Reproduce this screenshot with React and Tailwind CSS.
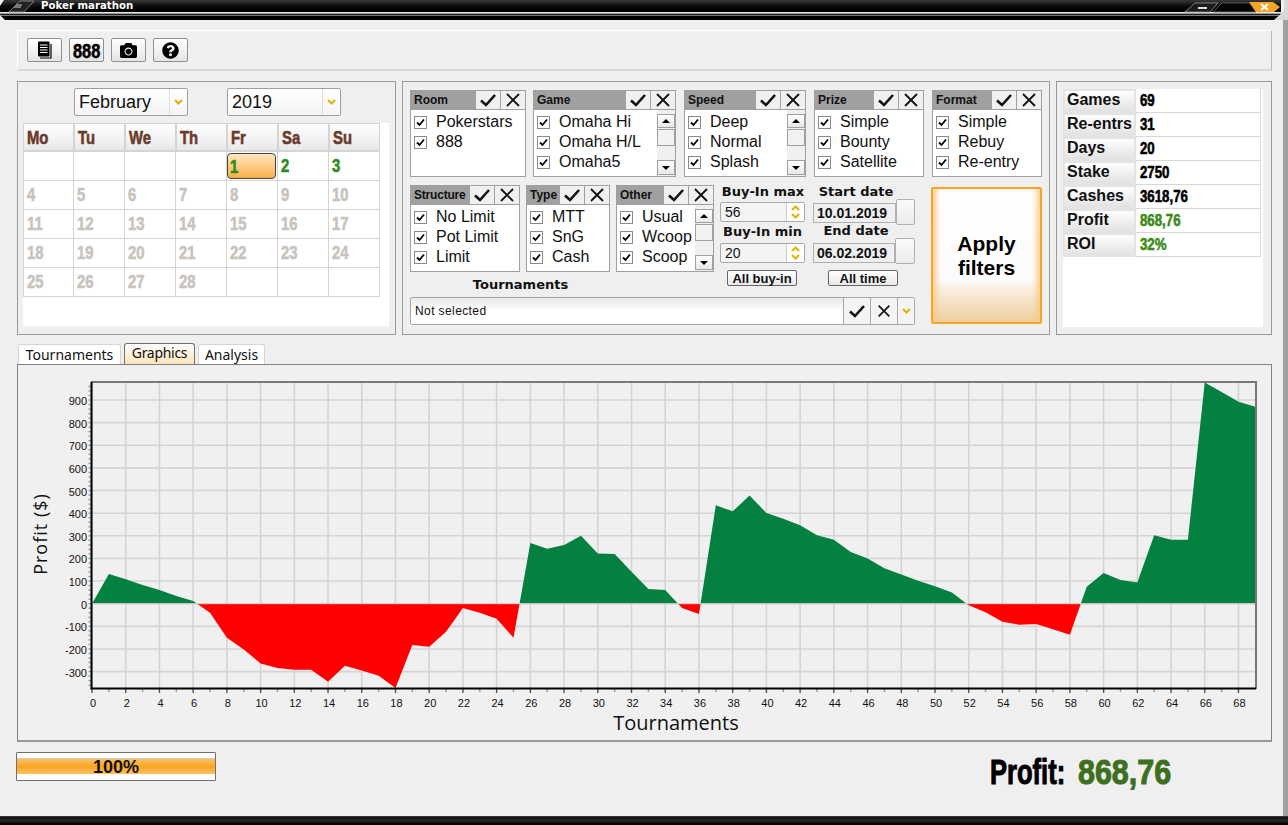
import React from 'react';
import { FaCamera, FaQuestionCircle } from 'react-icons/fa';

const arial = "font-['Liberation_Sans',Arial,sans-serif]";
const label = "font-['DejaVu_Sans',sans-serif] font-bold text-[13px] text-[#111]";

const PROFIT = [0, 131, 108, 83, 60, 34, 12, -40, -150, -202, -264, -284, -292, -292, -345, -274, -295, -318, -372, -183, -190, -124, -19, -40, -66, -150, 268, 243, 259, 300, 222, 220, 141, 65, 60, -19, -46, 435, 408, 478, 401, 375, 347, 302, 283, 229, 200, 157, 129, 101, 77, 49, -7, -38, -80, -93, -90, -113, -137, 75, 136, 105, 94, 303, 283, 283, 978, 935, 892, 870];

const X0 = 92;
const XSTEP = 16.86;
const Y0 = 603.7;
const YSCALE = 0.2263;
const px = (i) => X0 + i * XSTEP;
const py = (v) => Y0 - v * YSCALE;

// no Impact on this box, so squeeze bold Liberation horizontally
function Imp({ children, className = 'scale-x-[0.78] [-webkit-text-stroke:0.6px]' }) {
  return (
    <span className={`inline-block origin-left whitespace-nowrap ${arial} font-bold ${className}`}>{children}</span>
  );
}

function CheckIcon({ size = 18 }) {
  return (
    <svg width={size} height={size} viewBox="0 0 18 18" fill="none" stroke="#111" strokeWidth="2.6">
      <path d="M2 9.5 L7 14 L16 4" />
    </svg>
  );
}

function CrossIcon({ size = 18 }) {
  return (
    <svg width={size} height={size} viewBox="0 0 18 18" fill="none" stroke="#111" strokeWidth="1.8">
      <path d="M3 3 L15 15 M15 3 L3 15" />
    </svg>
  );
}

function Chevron({ up }) {
  return (
    <svg width="9" height="6" viewBox="0 0 9 6" fill="none" stroke="#e5b000" strokeWidth="2">
      <path d={up ? 'M1 5 L4.5 1.5 L8 5' : 'M1 1 L4.5 4.5 L8 1'} />
    </svg>
  );
}

function Box({ checked = true }) {
  return (
    <span className="w-[13px] h-[13px] border border-[#8a8a8a] bg-white flex items-center justify-center shrink-0">
      {checked && (
        <svg width="9" height="9" viewBox="0 0 9 9" fill="none" stroke="#000" strokeWidth="1.8">
          <path d="M1 4.5 L3.5 7 L8 1.5" />
        </svg>
      )}
    </span>
  );
}

function Scrollbar() {
  return (
    <div className="w-[18px] bg-[#f0f0f0] flex flex-col shrink-0">
      <div className="h-[14px] mt-[4px] border border-[#a0a0a0] bg-linear-to-b from-white to-[#e8e8e8] flex items-center justify-center">
        <span className="w-0 h-0 border-x-[4px] border-x-transparent border-b-[4px] border-b-black" />
      </div>
      <div className="h-[17px] mt-px border border-[#a0a0a0] bg-[#f2f2f2]" />
      <div className="h-[15px] mt-auto mb-px border border-[#a0a0a0] bg-linear-to-b from-white to-[#e8e8e8] flex items-center justify-center">
        <span className="w-0 h-0 border-x-[4px] border-x-transparent border-t-[4px] border-t-black" />
      </div>
    </div>
  );
}

function FilterBox({ title, items, width, scroll, narrow }) {
  return (
    <div className={`${width} h-[87px] border border-[#a0a0a0] bg-white flex flex-col shrink-0`}>
      <div className="h-[19px] flex bg-[#a0a0a0] items-stretch shrink-0">
        <div className={`flex-1 pl-[3px] ${arial} font-bold text-[12px] leading-[19px] text-[#111] ${narrow ? 'tracking-[-0.2px]' : ''}`}>{title}</div>
        <button className="w-[25px] bg-[#f0f0f0] border-r border-b border-[#a0a0a0] flex items-center justify-center"><CheckIcon size={18} /></button>
        <button className="w-[24px] bg-[#f0f0f0] border-b border-[#a0a0a0] flex items-center justify-center"><CrossIcon size={18} /></button>
      </div>
      <div className="flex-1 flex min-h-0">
        <div className="flex-1 pt-[2px] pl-[3px]">
          {items.map((t) => (
            <div key={t} className="h-[20px] flex items-center gap-[9px]">
              <Box />
              <span className={`${arial} text-[16px] text-[#111] whitespace-nowrap`}>{t}</span>
            </div>
          ))}
        </div>
        {scroll && <Scrollbar />}
      </div>
    </div>
  );
}

function SpinField({ value, width }) {
  return (
    <div className={`${width} h-[20px] border border-[#a8a8a8] bg-[#f4f4f4] flex items-center rounded-[2px]`}>
      <span className={`flex-1 pl-[4px] ${arial} text-[14px] text-[#111]`}>{value}</span>
      <div className="w-[18px] h-full flex flex-col items-center justify-center gap-[2px] border-l border-[#ccc] bg-white">
        <Chevron up />
        <Chevron />
      </div>
    </div>
  );
}

function DateField({ value, fieldW, fieldMb }) {
  return (
    <div className="flex items-end">
      <div className={`${fieldW} ${fieldMb} h-[20px] border border-[#b0b0b0] bg-[#efefef] pl-[3px] ${arial} font-bold text-[14px] leading-[18px] text-[#111]`}>{value}</div>
      <div className="w-[20px] h-[26px] border border-[#b0b0b0] rounded-[2px] bg-linear-to-b from-[#fafafa] to-[#ececec]" />
    </div>
  );
}

function SmallButton({ children, width }) {
  return (
    <button className={`block ${width} h-[16px] border border-[#666] rounded-[2px] bg-linear-to-b from-white to-[#e8e8e8] ${arial} font-bold text-[13px] leading-[13px] text-[#111]`}>{children}</button>
  );
}

function ToolButton({ children }) {
  return (
    <button className="w-[35px] h-[24px] border border-[#909090] rounded-[2px] bg-linear-to-b from-white to-[#e4e4e4] flex items-center justify-center">
      {children}
    </button>
  );
}

function MonthSelect({ value, width }) {
  return (
    <div className={`${width} h-[28px] border border-[#a0a0a0] rounded-[2px] bg-linear-to-b from-white to-[#f4f4f4] flex items-center`}>
      <span className={`flex-1 pl-[4px] ${arial} text-[18px] text-[#111]`}>{value}</span>
      <div className="w-[18px] h-full border-l border-[#ddd] flex items-center justify-center"><Chevron /></div>
    </div>
  );
}

function Calendar() {
  const heads = ['Mo', 'Tu', 'We', 'Th', 'Fr', 'Sa', 'Su'];
  const cells = [null, null, null, null, 1, 2, 3];
  for (let d = 4; d <= 28; d++) cells.push(d);
  while (cells.length < 35) cells.push(null);
  return (
    <div className="mt-[7px] mr-[6px] bg-white h-[203px]">
      <div className="w-[357px] grid grid-cols-[repeat(7,51px)]">
        {heads.map((h) => (
          <div key={h} className="h-[29px] border border-[#d4d4d4] border-b-2 bg-linear-to-b from-white to-[#e8e8e8] pl-[3px] text-[#6b3a2a] text-[19px] leading-[26px]"><Imp>{h}</Imp></div>
        ))}
        {cells.map((d, i) => {
          const green = d !== null && d <= 3;
          return (
            <div key={i} className={`h-[29px] border-r border-b border-[#d4d4d4] ${i % 7 === 0 ? 'border-l' : ''} pl-[3px] text-[19px] leading-[27px] ${green ? 'text-[#2e8b1e]' : 'text-[#c8c3bc]'}`}>
              {d === 1 ? (
                <div className="-ml-[3px] mt-px w-[49px] h-[26px] border border-[#444] rounded-[4px] bg-linear-to-b from-[#fde6bd] to-[#f9b044] pl-[2px] leading-[24px]"><Imp>{d}</Imp></div>
              ) : <Imp>{d}</Imp>}
            </div>
          );
        })}
      </div>
    </div>
  );
}

function Stats() {
  const rows = [
    ['Games', '69'],
    ['Re-entrs', '31'],
    ['Days', '20'],
    ['Stake', '2750'],
    ['Cashes', '3618,76'],
    ['Profit', '868,76', true],
    ['ROI', '32%', true],
  ];
  return (
    <div className="w-[216px] border border-[#999] pl-[6px] pr-[8px] pt-[7px] pb-[7px] shrink-0 h-[254px]">
      <div className="bg-white h-full">
        {rows.map(([k, v, good]) => (
          <div key={k} className="flex h-[24px] w-[198px]">
            <div className={`w-[73px] border-2 border-[#e4e4e4] bg-linear-to-b from-white to-[#e2e2e2] pl-[2px] ${arial} font-bold text-[16px] leading-[18px] text-[#111] whitespace-nowrap`}>{k}</div>
            <div className={`flex-1 border-b border-r border-[#d8d8d8] pl-[4px] text-[17px] leading-[21px] ${good ? 'text-[#3d8a17]' : 'text-black'}`}><Imp>{v}</Imp></div>
          </div>
        ))}
      </div>
    </div>
  );
}

function Chart() {
  const pts = PROFIT.map((v, i) => `${px(i)},${py(v)}`).join(' ');
  const area = `${px(0)},${Y0} ${pts} ${px(69)},${Y0}`;
  const yLabels = [900, 800, 700, 600, 500, 400, 300, 200, 100, 0, -100, -200, -300];
  const xMajor = [];
  for (let i = 0; i <= 68; i += 2) xMajor.push(i);
  const xMinor = [];
  for (let i = 0; i <= 68; i++) xMinor.push(i);
  const yMinor = [];
  for (let v = -360; v <= 970; v += 20) yMinor.push(v);
  return (
    <svg width="1252" height="376" viewBox="18 365 1252 376" className="block">
      <defs>
        <clipPath id="above"><rect x="90" y="380" width="1170" height={Y0 - 380} /></clipPath>
        <clipPath id="below"><rect x="90" y={Y0} width="1170" height="90" /></clipPath>
      </defs>
      {yLabels.map((v) => (
        <line key={v} x1="92" x2="1256" y1={py(v)} y2={py(v)} stroke="#d4d4d4" strokeWidth="1.6" />
      ))}
      {xMajor.map((i) => (
        <line key={i} x1={px(i)} x2={px(i)} y1="382" y2="688" stroke="#d4d4d4" strokeWidth="1.6" />
      ))}
      <polygon points={area} fill="#048040" clipPath="url(#above)" />
      <polygon points={area} fill="#ff0000" clipPath="url(#below)" />
      <line x1={X0} x2="1256" y1={Y0} y2={Y0} stroke="#d4d4d4" strokeWidth="1" />
      <line x1="91" x2="1257" y1="382" y2="382" stroke="#777" strokeWidth="2" />
      <line x1="1256" x2="1256" y1="382" y2="689" stroke="#777" strokeWidth="2" />
      {yMinor.map((v) => (
        <line key={v} x1="88.5" x2="91" y1={py(v)} y2={py(v)} stroke="#999" strokeWidth="1.4" />
      ))}
      {xMinor.map((i) => (
        <line key={i} x1={px(i)} x2={px(i)} y1="689" y2={i % 2 ? 692 : 693} stroke={i % 2 ? '#999' : '#555'} strokeWidth="1.4" />
      ))}
      <line x1="91.5" x2="91.5" y1="382" y2="689" stroke="#000" strokeWidth="2" />
      <line x1="90.5" x2="1256" y1="688.5" y2="688.5" stroke="#000" strokeWidth="2" />
      {yLabels.map((v) => (
        <text key={v} x="87" y={py(v) + 5} textAnchor="end" fontSize="11" fill="#111" fontFamily="'Liberation Sans', sans-serif">{v}</text>
      ))}
      {xMajor.map((i) => (
        <text key={i} x={px(i) + 1} y="707" textAnchor="middle" fontSize="11" fill="#111" fontFamily="'Liberation Sans', sans-serif">{i}</text>
      ))}
      <text x="676" y="730" textAnchor="middle" fontSize="20" fill="#111" fontFamily="'Open Sans', sans-serif">Tournaments</text>
      <text transform="translate(47 534) rotate(-90)" textAnchor="middle" fontSize="18" letterSpacing="1" fill="#111" fontFamily="'Open Sans', sans-serif">Profit ($)</text>
    </svg>
  );
}

function TitleBar() {
  return (
    <div className="relative h-[20px] shrink-0 bg-black">
      <svg width="1288" height="20" viewBox="0 0 1288 20" className="absolute inset-0">
        <defs>
          <linearGradient id="tb" x1="0" y1="0" x2="0" y2="1">
            <stop offset="0" stopColor="#3a3a3a" />
            <stop offset="0.5" stopColor="#0a0a0a" />
            <stop offset="1" stopColor="#000" />
          </linearGradient>
        </defs>
        <rect width="1288" height="12" fill="url(#tb)" />
        <rect y="12" width="1288" height="1" fill="#e8e8e8" />
        <rect y="13" width="1288" height="1" fill="#999" />
        <rect y="14" width="1288" height="1" fill="#222" />
        <rect y="15" width="1288" height="1" fill="#777" />
        <path d="M0 0 H4 L0 6 Z M0 20 H5 L0 15 Z" fill="#efefef" />
        <path d="M9 12 L20 1 H34 L24 12 Z" fill="#222" stroke="#999" strokeWidth="0.8" />
        <path d="M14 7 H21 M16 5 H22" stroke="#ccc" strokeWidth="1" />
        <path d="M1185 12 L1195 3 H1218 L1210 12 Z" fill="#1c1c1c" stroke="#999" strokeWidth="0.8" />
        <rect x="1198" y="7" width="9" height="2" fill="#ddd" />
        <path d="M1213 12 L1222 3 H1250 L1256 12 Z" fill="#050505" stroke="#666" strokeWidth="0.8" />
        <path d="M1249 2 H1273 L1280 7 L1274 12 H1256 Z" fill="#f5a425" />
        <path d="M1261 4 L1268 10 M1268 4 L1261 10" stroke="#fff" strokeWidth="2" />
        <path d="M1274 20 L1288 8 V0 H1281 V20 Z" fill="#efefef" />
        <path d="M1275 20 L1284 11 V0 H1288 V20 Z" fill="#d8d8d8" />
      </svg>
      <div className="relative pl-[41px] font-['DejaVu_Sans',sans-serif] font-bold text-[10.2px] leading-[12px] text-white">Poker marathon</div>
    </div>
  );
}

export default function App() {
  return (
    <div className="w-[1288px] h-[825px] overflow-hidden bg-[#efefef] flex flex-col">
      <TitleBar />
      <div className="flex-1 flex min-h-0">
        <div className="flex-1 pl-[17px] pr-[11px] pt-[10px]">
          {/* Toolbar */}
          <div className="h-[41px] border-t border-l border-white border-b-2 border-b-[#d8d8d8] border-r border-r-[#bbb] pl-[9px] flex items-center gap-[7px]">
            <ToolButton>
              <svg width="16" height="18" viewBox="0 0 16 18" fill="none" stroke="#000">
                <path d="M1.5 1 H12 V15 H1.5 Z" fill="#000" />
                <path d="M3 4 H10.5 M3 6.5 H10.5 M3 9 H10.5 M3 11.5 H10.5" stroke="#fff" />
                <path d="M14 3 V17 H3" strokeWidth="1.2" />
              </svg>
            </ToolButton>
            <ToolButton>
              <span className="w-[27px] text-[21px] leading-none text-black"><Imp>888</Imp></span>
            </ToolButton>
            <ToolButton><FaCamera size={17} color="#000" /></ToolButton>
            <ToolButton><FaQuestionCircle size={17} color="#000" /></ToolButton>
          </div>

          {/* Top panels */}
          <div className="mt-[10px] flex gap-[6px] h-[254px]">
            <div className="w-[379px] border border-[#999] pl-[5px] pt-[6px] shrink-0">
              <div className="flex pl-[51px] gap-[39px]">
                <MonthSelect value="February" width="w-[114px]" />
                <MonthSelect value="2019" width="w-[114px]" />
              </div>
              <Calendar />
            </div>

            <div className="w-[648px] border border-[#999] pl-[7px] pt-[8px] shrink-0">
              <div className="flex">
                <FilterBox title="Room" items={['Pokerstars', '888']} width="w-[116px]" />
                <div className="w-[7px]" />
                <FilterBox title="Game" items={['Omaha Hi', 'Omaha H/L', 'Omaha5']} width="w-[143px]" scroll />
                <div className="w-[8px]" />
                <FilterBox title="Speed" items={['Deep', 'Normal', 'Splash']} width="w-[122px]" scroll />
                <div className="w-[8px]" />
                <FilterBox title="Prize" items={['Simple', 'Bounty', 'Satellite']} width="w-[110px]" />
                <div className="w-[8px]" />
                <FilterBox title="Format" items={['Simple', 'Rebuy', 'Re-entry']} width="w-[110px]" />
              </div>
              <div className="flex mt-[8px]">
                <div className="w-[505px]">
                  <div className="flex">
                    <div className="w-[304px]">
                      <div className="flex gap-[6px]">
                        <FilterBox title="Structure" items={['No Limit', 'Pot Limit', 'Limit']} width="w-[110px]" narrow />
                        <FilterBox title="Type" items={['MTT', 'SnG', 'Cash']} width="w-[84px]" />
                        <FilterBox title="Other" items={['Usual', 'Wcoop', 'Scoop']} width="w-[98px]" scroll />
                      </div>
                      <div className={`${label} text-center w-[221px] mt-[5px] leading-[16px]`}>Tournaments</div>
                    </div>
                    <div className="w-[92px] pl-[6px]">
                      <div className={`${label} text-center leading-[14px] whitespace-nowrap`}>Buy-In max</div>
                      <div className="mt-[3px]"><SpinField value="56" width="w-[85px]" /></div>
                      <div className={`${label} text-center leading-[14px] mt-[3px] whitespace-nowrap -ml-[1px]`}>Buy-In min</div>
                      <div className="mt-[4px]"><SpinField value="20" width="w-[85px]" /></div>
                      <div className="mt-[7px] ml-[7px]"><SmallButton width="w-[70px]">All buy-in</SmallButton></div>
                    </div>
                    <div className="w-[109px] pl-[7px]">
                      <div className={`${label} text-[12.5px] text-center leading-[14px] w-[86px]`}>Start date</div>
                      <DateField value="10.01.2019" fieldW="w-[85px]" fieldMb="mb-[2px]" />
                      <div className={`${label} text-[12.5px] text-center leading-[14px] w-[86px] mt-[-1px]`}>End date</div>
                      <DateField value="06.02.2019" fieldW="w-[83px]" fieldMb="mb-px" />
                      <div className="mt-[6px] ml-[15px]"><SmallButton width="w-[70px]">All time</SmallButton></div>
                    </div>
                  </div>
                  <div className="mt-[4px] h-[28px] w-[505px] border border-[#a8a8a8] rounded-[2px] bg-linear-to-b from-[#e8e8e8] via-white to-white flex items-stretch">
                    <div className={`flex-1 pl-[4px] ${arial} text-[12px] leading-[26px] tracking-[0.4px] text-[#111]`}>Not selected</div>
                    <div className="w-[27px] border-l border-[#a8a8a8] bg-[#f4f4f4] flex items-center justify-center"><CheckIcon size={18} /></div>
                    <div className="w-[27px] border-l border-[#a8a8a8] bg-[#f4f4f4] flex items-center justify-center"><CrossIcon size={16} /></div>
                    <div className="w-[17px] border-l border-[#a8a8a8] bg-[#f4f4f4] flex items-center justify-center"><Chevron /></div>
                  </div>
                </div>
                <button className="ml-[16px] mt-[2px] w-[111px] h-[137px] border-2 border-[#f5a623] rounded-[2px] bg-[linear-gradient(#fff_0%,#fcfcfc_68%,#f9efe0_75%,#f6e6cf_82%,#f2dbb8_90%,#efd09f_100%)] shadow-[inset_7px_0_6px_-4px_#f7c98a,inset_-7px_0_6px_-4px_#f7c98a] flex items-center justify-center">
                  <span className={`${arial} font-bold text-[21px] leading-[24px] text-black`}>Apply<br />filters</span>
                </button>
              </div>
            </div>

            <Stats />
          </div>

          {/* Tabs */}
          <div className="mt-[8px] h-[21px] flex items-end gap-[3px] pl-px font-['Noto_Sans',sans-serif] text-[14px] text-[#111]">
            <div className="w-[103px] h-[20px] border border-b-0 border-[#d4d4d4] rounded-t-[3px] bg-white text-center leading-[20px]">Tournaments</div>
            <div className="w-[71px] h-[21px] border border-b-0 border-[#707070] rounded-t-[3px] bg-linear-to-b from-white to-[#fde3b8] text-center leading-[18px] tracking-[-0.3px]">Graphics</div>
            <div className="w-[67px] h-[20px] border border-b-0 border-[#d4d4d4] rounded-t-[3px] bg-white text-center leading-[20px]">Analysis</div>
          </div>

          {/* Chart */}
          <div className="w-[1255px] h-[378px] border border-[#808080] border-b-2 border-b-[#999] bg-[#f0f0f0]">
            <Chart />
          </div>

          {/* Bottom row */}
          <div className="mt-[10px] flex items-start justify-between">
            <div className="w-[200px] h-[29px] -ml-px border border-[#707070] rounded-[1px] bg-white flex flex-col justify-center">
              <div className={`h-[16px] mt-[-2px] bg-linear-to-b from-[#fbc160] via-[#f9a51f] to-[#fbc160] border-t border-[#ccc] text-center ${arial} font-bold text-[18px] leading-[16px] text-[#111]`}>100%</div>
            </div>
            <div className="mr-[99px] flex text-[35px] leading-[38px]">
              <span className="w-[88px] text-black"><Imp className="scale-x-[0.73] [-webkit-text-stroke:1px]">Profit:</Imp></span>
              <span className="w-[95px] text-[#3d6f1f]"><Imp className="scale-x-[0.87] [-webkit-text-stroke:1px]">868,76</Imp></span>
            </div>
          </div>
        </div>
        <div className="w-[5px] bg-[#a0a0a0] shrink-0" />
      </div>
      <div className="h-[9px] bg-linear-to-b from-[#111] via-[#2a2a2a] to-black border-t border-[#333] shrink-0" />
    </div>
  );
}
